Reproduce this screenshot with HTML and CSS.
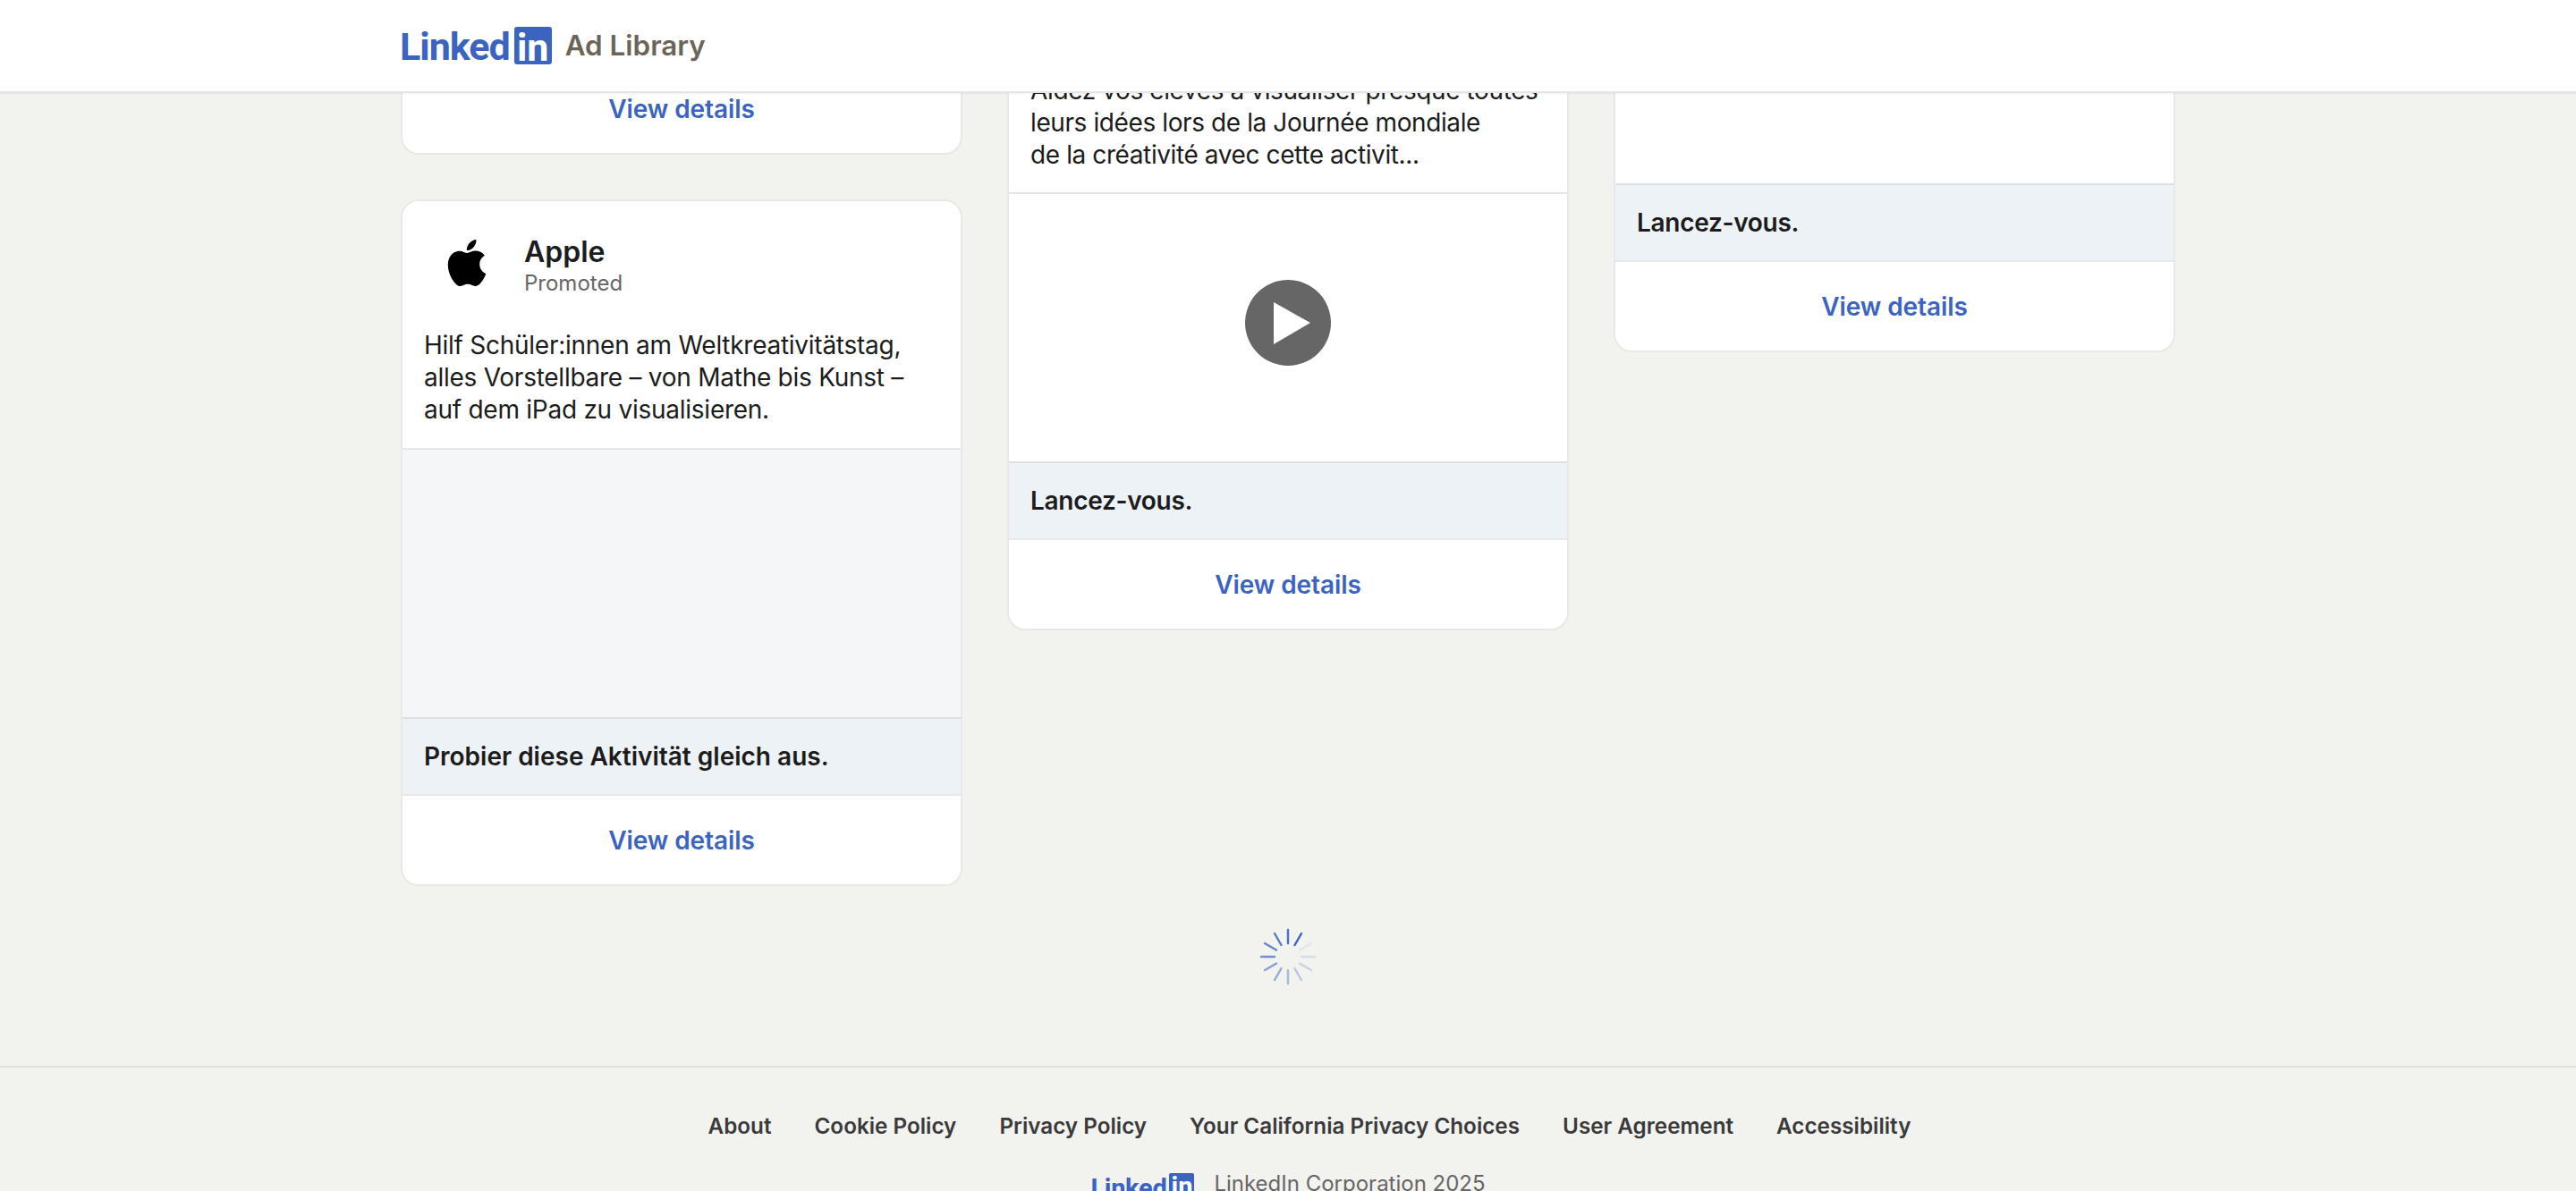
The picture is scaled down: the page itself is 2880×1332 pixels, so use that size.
FILE: index.html
```html
<!DOCTYPE html>
<html lang="en">
<head>
<meta charset="utf-8">
<title>LinkedIn Ad Library</title>
<link rel="stylesheet" href="styles.css">
</head>
<body>
<header class="topbar">
  <div class="container topbar-inner">
    <a class="logo logo--large"><span class="logo-word">Linked</span><span class="logo-box">in</span></a>
    <span class="product">Ad Library</span>
  </div>
</header>
<main class="container">
  <div class="columns">
    <section class="column">
      <article class="card card--cut card--stub">
        <a class="action">View details</a>
      </article>
      <article class="card">
        <div class="advertiser">
          <svg class="apple" viewBox="0 0 24 24"><path d="M12.152 6.896c-.948 0-2.415-1.078-3.96-1.04-2.04.027-3.91 1.183-4.961 3.014-2.117 3.675-.546 9.103 1.519 12.09 1.013 1.454 2.208 3.09 3.792 3.039 1.52-.065 2.09-.987 3.935-.987 1.831 0 2.35.987 3.96.948 1.637-.026 2.676-1.48 3.676-2.948 1.156-1.688 1.636-3.325 1.662-3.415-.039-.013-3.182-1.221-3.22-4.857-.026-3.04 2.48-4.494 2.597-4.559-1.429-2.09-3.623-2.324-4.39-2.376-2-.156-3.675 1.09-4.61 1.09zM15.53 3.83c.843-1.012 1.4-2.427 1.245-3.83-1.207.052-2.662.805-3.532 1.818-.78.896-1.454 2.338-1.273 3.714 1.338.104 2.715-.688 3.559-1.701"/></svg>
          <div class="advertiser-text">
            <div class="name">Apple</div>
            <div class="promoted">Promoted</div>
          </div>
        </div>
        <p class="copy">Hilf Schüler:innen am Weltkreativitätstag,<br>alles Vorstellbare – von Mathe bis Kunst –<br>auf dem iPad zu visualisieren.</p>
        <div class="media media--grey"></div>
        <div class="cta">Probier diese Aktivität gleich aus.</div>
        <a class="action">View details</a>
      </article>
    </section>
    <section class="column">
      <article class="card card--cut">
        <p class="copy copy--cut">Aidez vos élèves à visualiser presque toutes<br>leurs idées lors de la Journée mondiale<br>de la créativité avec cette activit...</p>
        <div class="media media--video">
          <svg class="play" viewBox="0 0 96 96"><circle cx="48" cy="48" r="48" fill="#666"/><path d="M32 25 L73 48 L32 72 Z" fill="#fff"/></svg>
        </div>
        <div class="cta cta--fr">Lancez-vous.</div>
        <a class="action">View details</a>
      </article>
    </section>
    <section class="column">
      <article class="card card--cut">
        <div class="media media--short"></div>
        <div class="cta cta--fr">Lancez-vous.</div>
        <a class="action">View details</a>
      </article>
    </section>
  </div>
  <div class="spinner-wrap">
    <svg class="spinner" viewBox="0 0 64 64">
      <g stroke="#3564c4" stroke-width="2.4" stroke-linecap="round">
        <line x1="32" y1="2" x2="32" y2="17" opacity=".9"/>
        <line x1="32" y1="2" x2="32" y2="17" transform="rotate(30 32 32)"/>
        <line x1="32" y1="2" x2="32" y2="17" transform="rotate(60 32 32)" opacity=".08"/>
        <line x1="32" y1="2" x2="32" y2="17" transform="rotate(90 32 32)" opacity=".14"/>
        <line x1="32" y1="2" x2="32" y2="17" transform="rotate(120 32 32)" opacity=".22"/>
        <line x1="32" y1="2" x2="32" y2="17" transform="rotate(150 32 32)" opacity=".3"/>
        <line x1="32" y1="2" x2="32" y2="17" transform="rotate(180 32 32)" opacity=".4"/>
        <line x1="32" y1="2" x2="32" y2="17" transform="rotate(210 32 32)" opacity=".5"/>
        <line x1="32" y1="2" x2="32" y2="17" transform="rotate(240 32 32)" opacity=".58"/>
        <line x1="32" y1="2" x2="32" y2="17" transform="rotate(270 32 32)" opacity=".68"/>
        <line x1="32" y1="2" x2="32" y2="17" transform="rotate(300 32 32)" opacity=".75"/>
        <line x1="32" y1="2" x2="32" y2="17" transform="rotate(330 32 32)" opacity=".83"/>
      </g>
    </svg>
  </div>
</main>
<footer class="footer">
  <nav class="footer-links">
    <a>About</a><a>Cookie Policy</a><a>Privacy Policy</a><a>Your California Privacy Choices</a><a>User Agreement</a><a>Accessibility</a>
  </nav>
  <div class="footer-brand">
    <a class="logo logo--small"><span class="logo-word">Linked</span><span class="logo-box">in</span></a>
    <span class="copyright">LinkedIn Corporation 2025</span>
  </div>
</footer>
</body>
</html>
```
FILE: styles.css
```css
* { box-sizing: border-box; }
html, body { margin: 0; height: 100%; overflow: hidden; }
body {
  background: #f2f2ee;
  color: #1c1c1c;
  font-family: Inter, "Noto Sans", sans-serif;
  font-size: 28px;
  line-height: 36px;
  position: relative;
}
.container { width: 1984px; margin: 0 auto; }

.topbar {
  position: absolute;
  top: 0; left: 0; right: 0;
  height: 104px;
  background: #fff;
  border-bottom: 2px solid #e6e6e6;
  box-shadow: 0 1px 2px rgba(0,0,0,.06);
  z-index: 2;
}
.topbar-inner { display: flex; align-items: center; height: 100%; gap: 15px; }
.logo { display: inline-flex; align-items: flex-start; color: #3a64c0; font-family: Roboto, "Liberation Sans", sans-serif; font-weight: 700; }
.logo--large { font-size: 43px; line-height: 42px; gap: 5px; margin-left: -1px; }
.logo--large .logo-word { letter-spacing: -1px; padding-top: 1px; }
.logo--large .logo-box { width: 42px; height: 42px; border-radius: 3px; line-height: 46px; }
.logo-box { background: #3a64c0; color: #fff; text-align: center; }
.product { font-size: 31.4px; font-weight: 600; color: #6b6558; line-height: 42px; }

.columns { display: grid; grid-template-columns: repeat(3, 628px); gap: 50px; align-items: start; }
.column { display: flex; flex-direction: column; gap: 50px; }
.card {
  background: #fff;
  border: 2px solid #e8e8e6;
  border-radius: 20px;
  overflow: hidden;
}
.card--cut { border-top: 0; border-top-left-radius: 0; border-top-right-radius: 0; }
.card--stub { height: 173px; display: flex; flex-direction: column; justify-content: flex-end; }

.advertiser { display: flex; align-items: center; height: 133px; padding: 10px 0 0 46px; gap: 38px; }
.apple { width: 52px; height: 52px; flex: none; margin-top: -6px; }
.name { font-size: 32px; line-height: 40px; font-weight: 600; }
.promoted { font-size: 24px; line-height: 30px; color: #666; }
.copy { margin: 0; padding: 10px 24px 25px; height: 143px; letter-spacing: -.26px; white-space: nowrap; }
.copy--cut { height: 215px; padding: 83px 24px 24px; letter-spacing: -.4px; }

.media { height: 301px; border-top: 2px solid #e6e6e6; display: flex; align-items: center; justify-content: center; background: #fff; }
.media--grey { background: #f4f6f8; }
.media--video { padding-bottom: 12px; }
.media--short { height: 205px; border-top: 0; }
.play { width: 96px; height: 96px; }
.cta {
  height: 88px;
  background: #edf2f6;
  border-top: 2px solid #dcdfe4;
  border-bottom: 2px solid #e8e8e8;
  padding: 0 24px;
  font-weight: 600;
  display: flex;
  align-items: center;
}
.cta--fr { letter-spacing: -.3px; }
.action {
  display: flex;
  align-items: center;
  justify-content: center;
  height: 99px;
  color: #3a64c0;
  font-weight: 600;
  flex: none;
  letter-spacing: -.1px;
}

.spinner-wrap { display: flex; justify-content: center; padding: 47px 0 90px; }
.spinner { width: 64px; height: 64px; display: block; }

.footer { border-top: 2px solid #e0e0dd; }
.footer-links {
  display: flex;
  justify-content: center;
  gap: 48px;
  padding-top: 48px;
  padding-left: 48px;
  font-size: 24.25px;
  line-height: 36px;
  font-weight: 600;
  color: #3a3a3a;
}
.footer-brand { display: flex; justify-content: center; align-items: flex-start; gap: 22px; margin-top: 34px; }
.logo--small { font-size: 29px; line-height: 26px; gap: 3px; }
.logo--small .logo-box { width: 28px; height: 28px; border-radius: 2px; line-height: 30px; }
.logo--small .logo-word { padding-top: 4px; letter-spacing: -.3px; }
.copyright { font-size: 24px; color: #666; line-height: 36px; margin-top: -6px; }
```
